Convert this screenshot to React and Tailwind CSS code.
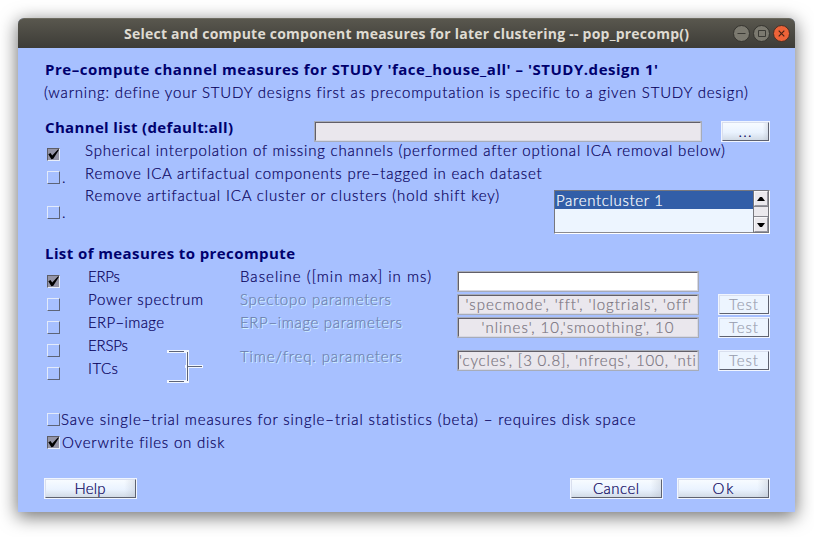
import { useLayoutEffect, useRef } from "react";

// Single-line text tracked out so that it spans the given width.
function Text({ w, className = "", children }) {
  const ref = useRef(null);
  useLayoutEffect(() => {
    const el = ref.current;
    el.style.letterSpacing = "0px";
    const natural = el.getBoundingClientRect().width;
    el.style.letterSpacing = `${(w - natural) / (children.length - 1)}px`;
  }, [w, children]);
  return (
    <span className={`block shrink-0 whitespace-pre ${className}`} style={{ width: w }}>
      <span ref={ref}>{children}</span>
    </span>
  );
}

function Check({ on, className = "" }) {
  return (
    <span
      className={`block h-[13px] w-[13px] shrink-0 border ${
        on
          ? "border-t-[#5d5d66] border-l-[#5d5d66] border-r-[#e8eefa] border-b-[#e8eefa] bg-[#9494a6]"
          : "border-t-[#e2eafa] border-l-[#e2eafa] border-r-[#5d6478] border-b-[#5d6478]"
      } ${className}`}
    >
      {on && (
        <svg viewBox="0 0 11 11" className="block h-[11px] w-[11px] overflow-visible">
          <path d="M0.3 5.2 L2.5 4 L4.2 6.4 L10.2 0.2 L11 0.8 L5.3 9.8 L3.4 10.3 Z" fill="#000" />
        </svg>
      )}
    </span>
  );
}

function Button({ w, label, className = "", disabled }) {
  return (
    <button
      className={`flex h-[21px] shrink-0 items-center justify-center border border-[#f0f5ff] ${className}`}
    >
      <span
        className={`flex h-[19px] w-full items-center justify-center border border-t-[#d9dfee] border-l-[#d9dfee] border-r-[#5e6270] border-b-[#5e6270] ${
          disabled
            ? "bg-[#edf5ff] text-[#9a9fb0]"
            : "bg-[linear-gradient(to_right,transparent_88%,#aeb6c455),linear-gradient(#f7fbff,#eaf3ff_55%,#d2dbe6)]"
        }`}
      >
        <Text w={w} className="mr-px">{label}</Text>
      </span>
    </button>
  );
}

function Field({ w, text, className = "" }) {
  return (
    <div
      className={`h-[21px] shrink-0 border border-[#a7acb9] ${className}`}
    >
      <div className="flex h-[19px] items-center justify-center overflow-hidden border border-t-[#625f68] border-l-[#625f68] border-r-[#d8d8e2] border-b-[#d8d8e2] text-[#7a7581]">
        {text && <Text w={w} className="mr-px">{text}</Text>}
      </div>
    </div>
  );
}

const measures = [
  ["ERPs", 32, true],
  ["Power spectrum", 115, false],
  ["ERP–image", 76, false],
  ["ERSPs", 40, false],
  ["ITCs", 30, false],
];

const dim = "text-[#6c80ae] [text-shadow:1px_1px_0_#d8f8ff]";
const heading =
  "ml-px font-['Open_Sans',sans-serif] font-bold text-[#00006e] [-webkit-text-stroke:0px]";

function ScrollArrow({ up }) {
  return (
    <span className="flex h-[15px] items-center justify-center border border-t-[#f8f8fa] border-l-[#f8f8fa] border-r-[#97979f] border-b-[#97979f] bg-[#ebe9ed]">
      <svg viewBox="0 0 8 4" className="h-1 w-2">
        <path d={up ? "M0 4 L3 0 H5 L8 4 Z" : "M0 0 H8 L5 4 H3 Z"} fill="#000" />
      </svg>
    </span>
  );
}

export default function App() {
  return (
    <div className="h-[537px] w-[814px] overflow-hidden bg-white px-[18px] pt-[18px]">
      <div className="h-[494px] w-[777px] rounded-t-[6px] bg-[#a7c0ff] shadow-[0_4px_18px_1px_rgba(0,0,0,0.55)]">
        <header className="flex h-[30px] items-center rounded-t-[6px] border-t border-[#6d6b60] bg-linear-to-b from-[#59574e] to-[#3d3c37] pl-[106px] font-['Open_Sans',sans-serif] text-[14px] font-bold text-[#dfdbd2]">
          <Text w={565} className="-mt-px">Select and compute component measures for later clustering -- pop_precomp()</Text>
          <div className="-mt-px ml-[44px] flex gap-[3px]">
            <svg viewBox="0 0 17 17" className="h-[17px] w-[17px]">
              <circle cx="8.5" cy="8.5" r="8" fill="#7b796f" stroke="#35342f" />
              <path d="M4.5 8.5 H12.5" stroke="#3b3a35" />
            </svg>
            <svg viewBox="0 0 17 17" className="h-[17px] w-[17px]">
              <circle cx="8.5" cy="8.5" r="8" fill="#7b796f" stroke="#35342f" />
              <path d="M5.5 5.5 H12.5 V11.5 H5.5 Z" fill="none" stroke="#3b3a35" />
            </svg>
            <svg viewBox="0 0 17 17" className="h-[17px] w-[17px]">
              <circle cx="8.5" cy="8.5" r="8" fill="#ee6338" stroke="#4a2f24" />
              <path d="M5.7 5.7 L11.3 11.3 M11.3 5.7 L5.7 11.3" stroke="#4a2314" strokeWidth="1.2" />
            </svg>
          </div>
        </header>

        <main className="flex h-[464px] flex-col pt-[10px] pr-[25px] pl-[26px] font-[Lato,sans-serif] text-[15px] leading-[23px] font-light text-[#08005c] [-webkit-text-stroke:0.2px]">
          <Text w={613} className={heading}>Pre–compute channel measures for STUDY 'face_house_all' – 'STUDY.design 1'</Text>
          <Text w={703}>(warning: define your STUDY designs first as precomputation is specific to a given STUDY design)</Text>

          <div className="mt-3 flex h-[23px]">
            <Text w={188} className={heading}>Channel list (default:all)</Text>
            <Field className="mt-[5px] ml-[81px] w-[388px] bg-[#eae7ed]" />
            <Button w={13} label="..." className="mt-[5px] ml-[19px] w-[49px]" />
          </div>
          <div className="flex h-[23px]">
            <Check on className="mt-[9px] ml-[3px]" />
            <Text w={640} className="ml-[25px]">Spherical interpolation of missing channels (performed after optional ICA removal below)</Text>
          </div>
          <div className="flex h-[22px]">
            <Check className="mt-[9px] ml-[3px]" />
            <span className="w-[25px] pt-[4px] pl-[2px]">.</span>
            <Text w={457}>Remove ICA artifactual components pre–tagged in each dataset</Text>
          </div>
          <div className="flex h-[58px]">
            <Check className="mt-[22px] ml-[3px]" />
            <span className="w-[25px] pt-[17px] pl-[2px]">.</span>
            <Text w={414}>Remove artifactual ICA cluster or clusters (hold shift key)</Text>
            <div className="mt-[6px] ml-[55px] flex h-[44px] w-[216px] border border-t-[#77777d] border-l-[#77777d] border-r-white border-b-white bg-[#edf5ff]">
              <div className="flex-1 border-b border-[#8a8a90]">
                <div className="flex h-[18px] items-center bg-[#325ea8] pl-px text-white">
                  <Text w={107}>Parentcluster 1</Text>
                </div>
              </div>
              <div className="flex w-[16px] flex-col border-r border-b border-l border-[#77777d] bg-[#ebe9ed]">
                <ScrollArrow up />
                <span className="flex-1 border-y border-[#85858c]" />
                <ScrollArrow />
              </div>
            </div>
          </div>

          <Text w={250} className={heading}>List of measures to precompute</Text>
          <div className="flex h-[143px]">
            <div className="flex w-[123px] flex-col">
              {measures.map(([label, w, on]) => (
                <div key={label} className="flex h-[23px]">
                  <Check on={on} className="mt-[10px] ml-[3px]" />
                  <Text w={w} className="ml-[28px]">{label}</Text>
                </div>
              ))}
            </div>
            <svg viewBox="0 0 36 33" className="mt-[85px] h-[33px] w-[36px]">
              <path d="M0 0 H22 V33 H0 V30 H19 V3 H0 Z M18 15 H36 V18 H18 Z" fill="#f1f6ff" />
              <path d="M2 1.5 H17 M2 31.5 H17 M20.5 2 V31 M20 16.5 H35" stroke="#5d6478" fill="none" />
            </svg>
            <div className="ml-[37px] flex w-[217px] flex-col">
              <Text w={191}>Baseline ([min max] in ms)</Text>
              <Text w={151} className={dim}>Spectopo parameters</Text>
              <Text w={162} className={dim}>ERP–image parameters</Text>
              <Text w={162} className={`mt-[11px] ${dim}`}>Time/freq. parameters</Text>
            </div>
            <div className="flex w-[242px] flex-col gap-[2px] pt-[6px]">
              <Field className="bg-white" />
              <Field w={224} text="'specmode', 'fft', 'logtrials', 'off'" className="bg-[#eae7ed]" />
              <Field w={192} text="'nlines', 10,'smoothing', 10" className="bg-[#eae7ed]" />
              <Field w={237} text="'cycles', [3 0.8], 'nfreqs', 100, 'nti" className="mt-[10px] bg-[#eae7ed]" />
            </div>
            <div className="ml-[19px] flex w-[52px] flex-col gap-[2px] pt-[29px]">
              <Button w={29} label="Test" disabled />
              <Button w={29} label="Test" disabled />
              <Button w={29} label="Test" disabled className="mt-[10px]" />
            </div>
          </div>

          <div className="flex h-[23px]">
            <Check className="mt-[5px] ml-[3px]" />
            <Text w={575} className="ml-px">Save single–trial measures for single–trial statistics (beta) – requires disk space</Text>
          </div>
          <div className="flex h-[23px]">
            <Check on className="mt-[5px] ml-[3px]" />
            <Text w={162} className="ml-[2px]">Overwrite files on disk</Text>
          </div>
          <div className="mt-6 flex">
            <Button w={31} label="Help" className="w-[93px]" />
            <Button w={46} label="Cancel" className="ml-auto w-[93px]" />
            <Button w={21} label="Ok" className="ml-[14px] w-[93px]" />
          </div>
        </main>
      </div>
    </div>
  );
}
